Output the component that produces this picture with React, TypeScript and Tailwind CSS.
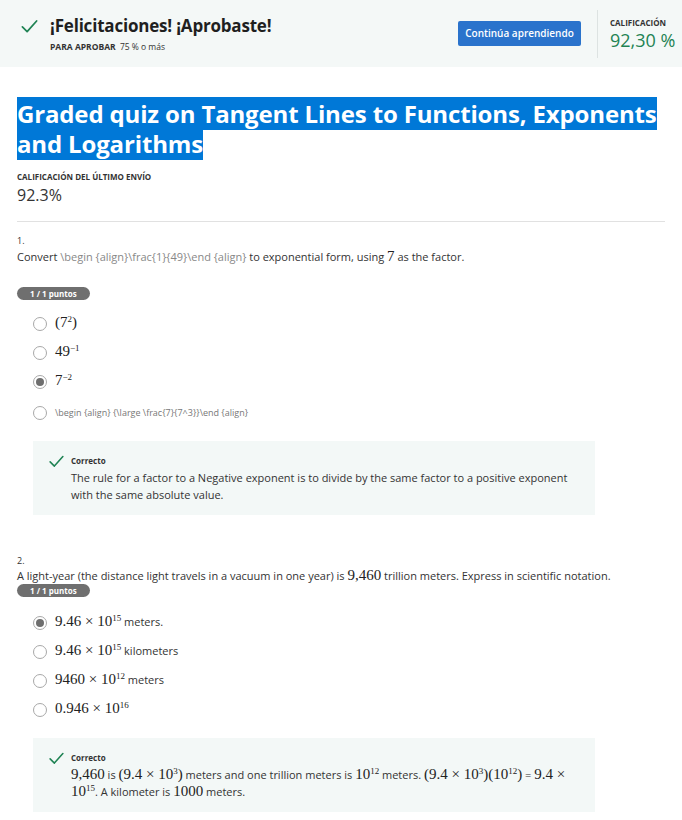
import React from 'react';

const sans = { fontFamily: '"Open Sans", "Liberation Sans", sans-serif' };

function Check({ className }: { className?: string }) {
  return (
    <svg viewBox="0 0 24 24" className={className} fill="none" stroke="#1f8354" strokeWidth="2.2" strokeLinecap="round" strokeLinejoin="round">
      <path d="M3 12.5l6 6L21 5" />
    </svg>
  );
}

function M({ children }: { children: React.ReactNode }) {
  return <span className="font-['Liberation_Serif',serif] text-[15px] leading-[15px] text-[#222]">{children}</span>;
}

function Sup({ children }: { children: React.ReactNode }) {
  return <sup className="text-[9px] top-[-0.6em]">{children}</sup>;
}

function Radio({ checked, label }: { checked?: boolean; label: React.ReactNode }) {
  return (
    <div className="flex items-center gap-[8px] h-[29px]">
      <span className="w-[14px] h-[14px] rounded-full border border-[#a8a8a8] flex items-center justify-center bg-white">
        {checked && <span className="w-[8px] h-[8px] rounded-full bg-[#6e6e6e]" />}
      </span>
      <span className="text-[11px] text-[#333]">{label}</span>
    </div>
  );
}

function Badge() {
  return (
    <div className="inline-flex items-center h-[13px] px-[13px] rounded-full bg-[#6f6f6f] text-white text-[8px] font-bold">1 / 1 puntos</div>
  );
}

function Feedback({ children }: { children: React.ReactNode }) {
  return (
    <div className="ml-[16px] w-[562px] bg-[#f3f8f7] pl-[15px] pr-[16px] pt-[11px] pb-[12px] flex gap-[6px]">
      <Check className="w-[17px] h-[17px] mt-[1px] shrink-0" />
      <div>
        <div className="text-[8px] font-bold text-[#333] mt-[3px]">Correcto</div>
        <div className="text-[11px] leading-[17px] text-[#333] mt-[2px]">{children}</div>
      </div>
    </div>
  );
}

export default function App() {
  return (
    <div style={sans} className="w-[682px] min-h-[820px] bg-white text-[#1f1f1f]">
      <div className="h-[67px] bg-[#f4f8f7] flex items-center pl-[20px]">
        <Check className="w-[19px] h-[19px] mt-[-14px]" />
        <div className="ml-[11px] flex-1">
          <div className="text-[17px] font-bold leading-[24px] tracking-[-0.2px]">¡Felicitaciones! ¡Aprobaste!</div>
          <div className="text-[8.5px] mt-[3px] text-[#333]">
            <span className="font-bold">PARA APROBAR</span> <span className="ml-[2px]">75 % o más</span>
          </div>
        </div>
        <button className="h-[25px] w-[123px] bg-[#2a73cc] text-white text-[10px] font-semibold rounded-[2px]">Continúa aprendiendo</button>
        <div className="w-px h-[48px] bg-[#dde3e2] ml-[16px]" />
        <div className="ml-[12px] w-[72px] whitespace-nowrap">
          <div className="text-[8px] font-bold text-[#333]">CALIFICACIÓN</div>
          <div className="text-[18px] leading-[22px] text-[#1f8354]">92,30 %</div>
        </div>
      </div>

      <div className="px-[17px]">
        <h1 className="mt-[32px] text-[24px] font-bold leading-[30px] tracking-[-0.15px] w-[650px]">
          <span className="bg-[#0078d7] text-white box-decoration-clone">Graded quiz on Tangent Lines to Functions, Exponents and Logarithms</span>
        </h1>
        <div className="mt-[12px] text-[8px] font-bold text-[#333]">CALIFICACIÓN DEL ÚLTIMO ENVÍO</div>
        <div className="text-[16px] mt-[0px] text-[#333]">92.3%</div>
        <div className="h-px bg-[#e1e1e1] mt-[14px]" />

        <div className="mt-[12px] text-[9px] leading-[14px] text-[#333]">1.</div>
        <div className="text-[11px] leading-[16px] text-[#333] mt-[1px]">
          Convert <span className="text-[#888]">\begin {'{align}'}\frac{'{1}{49}'}\end {'{align}'}</span> to exponential form, using <M>7</M> as the factor.
        </div>
        <div className="mt-[22px] flex"><Badge /></div>
        <div className="ml-[16px] mt-[9px]">
          <Radio label={<M>(7<Sup>2</Sup>)</M>} />
          <Radio label={<M>49<Sup>−1</Sup></M>} />
          <Radio checked label={<M>7<Sup>−2</Sup></M>} />
          <div className="mt-[2px]">
            <Radio label={<span className="text-[9px] text-[#777]">\begin {'{align}'} {'{'}\large \frac{'{7}{7^3}}'}\end {'{align}'}</span>} />
          </div>
        </div>
        <div className="mt-[14px]">
          <Feedback>The rule for a factor to a Negative exponent is to divide by the same factor to a positive exponent with the same absolute value.</Feedback>
        </div>

        <div className="mt-[39px] text-[9px] leading-[14px] text-[#333]">2.</div>
        <div className="text-[11px] leading-[16px] text-[#333] mt-[0px]">
          A light-year (the distance light travels in a vacuum in one year) is <M>9,460</M> trillion meters. Express in scientific notation.
        </div>
        <div className="mt-[0px] flex"><Badge /></div>
        <div className="ml-[16px] mt-[11px]">
          <Radio checked label={<><M>9.46 × 10<Sup>15</Sup></M> meters.</>} />
          <Radio label={<><M>9.46 × 10<Sup>15</Sup></M> kilometers</>} />
          <Radio label={<><M>9460 × 10<Sup>12</Sup></M> meters</>} />
          <Radio label={<M>0.946 × 10<Sup>16</Sup></M>} />
        </div>
        <div className="mt-[14px]">
          <Feedback>
            <M>9,460</M> is <M>(9.4 × 10<Sup>3</Sup>)</M> meters and one trillion meters is <M>10<Sup>12</Sup></M> meters. <M>(9.4 × 10<Sup>3</Sup>)(10<Sup>12</Sup>)</M> = <M>9.4 ×</M> <M>10<Sup>15</Sup></M>. A kilometer is <M>1000</M> meters.
          </Feedback>
        </div>
      </div>
    </div>
  );
}
